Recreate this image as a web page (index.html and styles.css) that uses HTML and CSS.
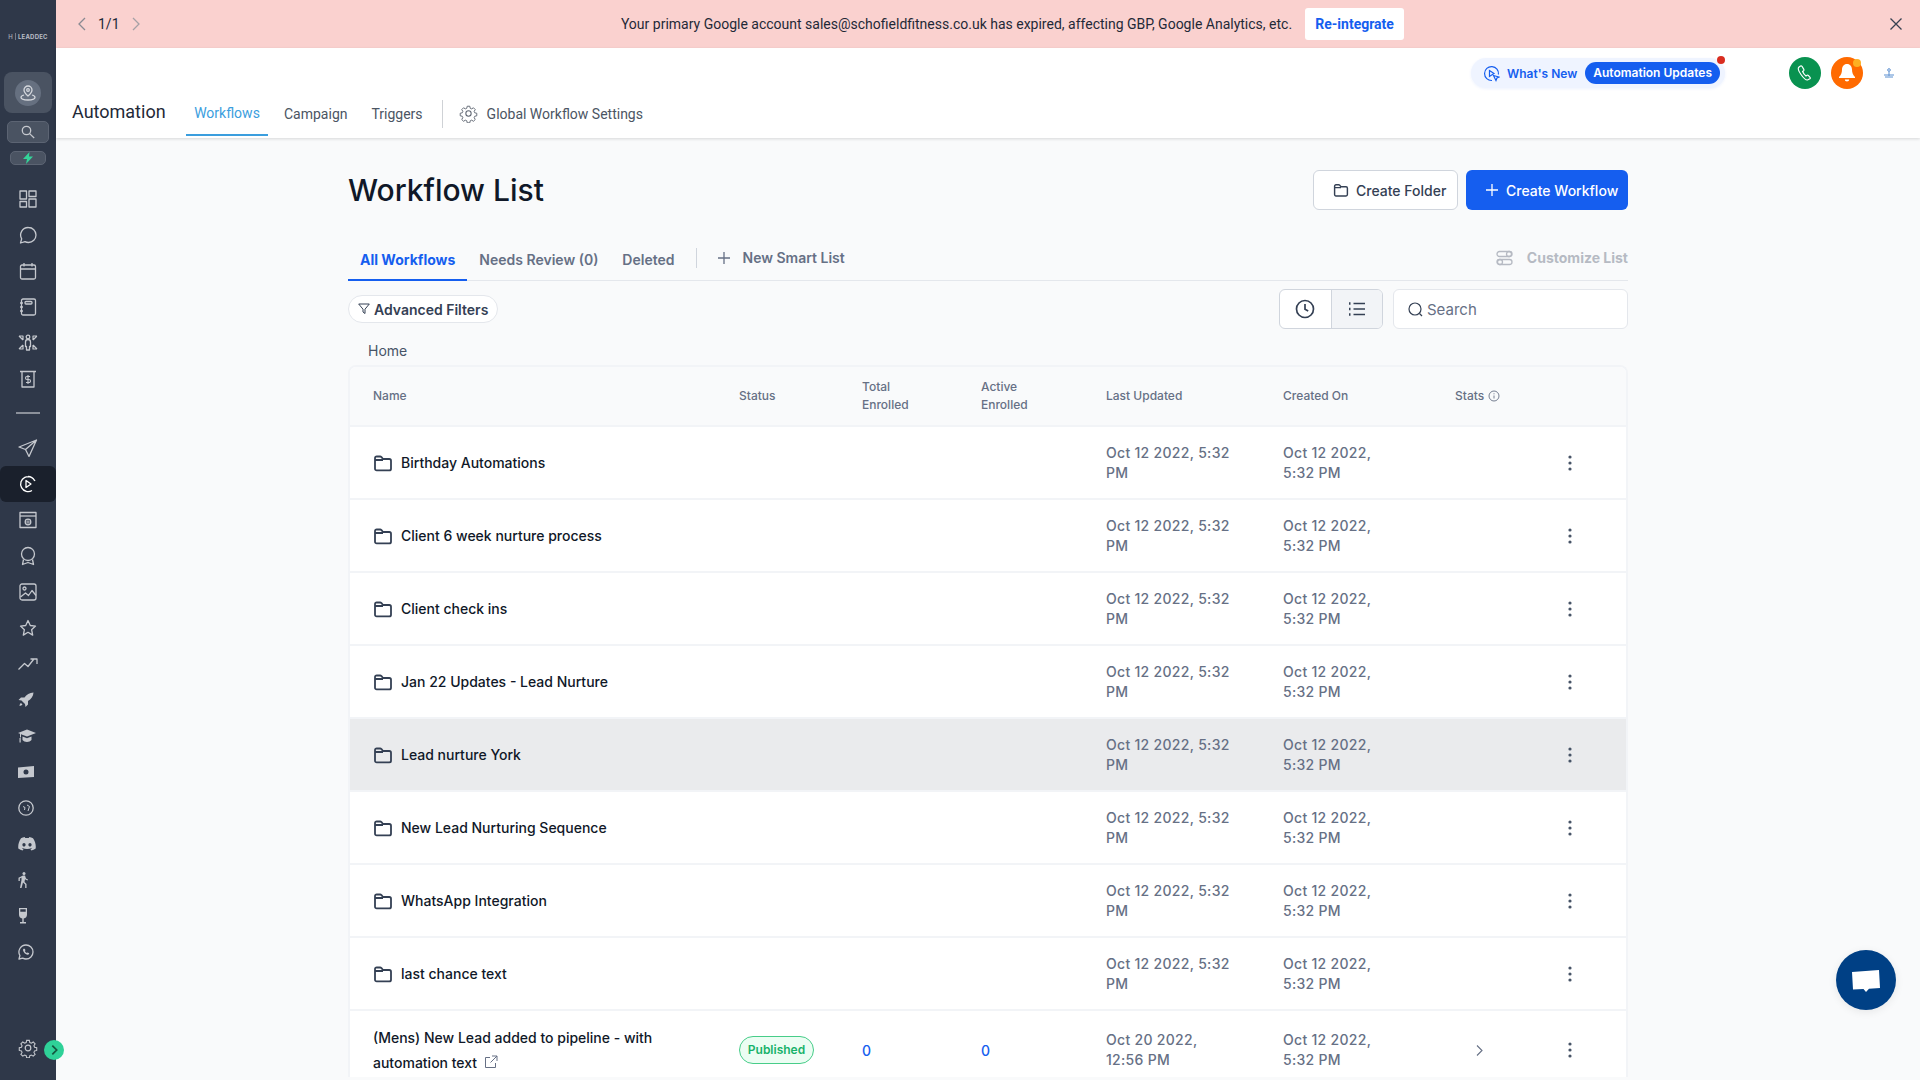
FILE: index.html
```html
<!DOCTYPE html>
<html>
<head>
    <title>Workflow List</title>
    <link rel="stylesheet" href="styles.css">
</head>
<body>
    <svg class="defs" width="0" height="0">
        <symbol id="folder" viewBox="0 0 20 20"><path d="M2 5.200c0-1 .7-1.700 1.700-1.700h3.400c.6 0 1 .3 1.400.7L10 6h6.300c1 0 1.700.7 1.700 1.700v8c0 1-.7 1.700-1.700 1.700H3.700c-1 0-1.700-.7-1.700-1.700z M2 7h8" fill="none" stroke="currentColor" stroke-width="1.800" stroke-linejoin="round"/></symbol>
        <symbol id="kebab" viewBox="0 0 4 16"><circle cx="2" cy="2" r="1.600"/><circle cx="2" cy="8" r="1.600"/><circle cx="2" cy="14" r="1.600"/></symbol>
    </svg>

    <aside class="sidebar">
        <div class="logo"><span class="logo-mark">H</span><span class="logo-text">LEADDEC</span></div>
        <div class="profile">
            <span class="profile-dot">
                <svg width="18" height="18" viewBox="0 0 18 18" fill="none" stroke="#d5d8dd" stroke-width="1.300"><path d="M9 2a4 4 0 0 1 4 4c0 2.500-4 6-4 6S5 8.500 5 6a4 4 0 0 1 4-4z"/><circle cx="9" cy="6" r="1.300"/><path d="M5 11c-2 .6-3 1.400-3 2.300C2 15 5 16 9 16s7-1 7-2.700c0-.9-1-1.700-3-2.300"/></svg>
            </span>
        </div>
        <div class="quick-search">
            <svg width="14" height="14" viewBox="0 0 14 14" fill="none" stroke="#c5c8ce" stroke-width="1.300"><circle cx="5.500" cy="5.500" r="4.200"/><path d="M8.600 8.600l4.600 4.400"/></svg>
        </div>
        <div class="bolt">
            <svg width="12" height="12" viewBox="0 0 12 12"><path d="M7.500 0L1 7h4l-1 5 7-7.500H7z" fill="#34d399"/></svg>
        </div>

        <nav class="nav">
            <a class="nav-item"><svg width="18" height="18" viewBox="0 0 18 18"><rect x="1" y="1" width="6.500" height="8"/><rect x="10" y="1" width="7" height="5.500"/><rect x="1" y="11.500" width="6.500" height="5.500"/><rect x="10" y="9" width="7" height="8"/></svg></a>
            <a class="nav-item"><svg width="18" height="18" viewBox="0 0 18 18"><path d="M9.500 1.500a7.500 7.500 0 0 1 0 15c-1.300 0-2.500-.3-3.500-.9L1.500 17l1.200-4.200A7.500 7.500 0 0 1 9.500 1.500z"/></svg></a>
            <a class="nav-item"><svg width="18" height="18" viewBox="0 0 18 18"><rect x="1.500" y="3" width="15" height="14" rx="1.500"/><path d="M1.500 7h15M5 1v3.500M13 1v3.500"/></svg></a>
            <a class="nav-item"><svg width="18" height="18" viewBox="0 0 18 18"><rect x="2.500" y="1" width="14" height="16" rx="1.500"/><rect x="6" y="3.500" width="7" height="2.500" rx="1"/><path d="M1 5h3M1 9h3M1 13h3"/></svg></a>
            <a class="nav-item"><svg width="20" height="18" viewBox="0 0 20 18"><circle cx="10" cy="3" r="1.800"/><path d="M7.500 8c0-1.500 1-2.500 2.500-2.500s2.500 1 2.500 2.500v4.500h-1V16h-3v-3.500h-1z"/><path d="M1 2h4v4M1 2l4 4M19 2h-4v4M19 2l-4 4M1 15h4v-4M1 15l4-4M19 15h-4v-4M19 15l-4-4" stroke-width="1.200"/></svg></a>
            <a class="nav-item"><svg width="18" height="18" viewBox="0 0 18 18"><path d="M1 1.500h16M3 1.500V17h12V1.500"/><path d="M11 6.500H8a1 1 0 0 0 0 3h2a1 1 0 0 1 0 3H7M9 5v9" stroke-width="1.100"/></svg></a>
            <div class="nav-divider"></div>
            <a class="nav-item"><svg width="20" height="18" viewBox="0 0 20 18"><path d="M18.500 1L1 8l6.500 2.500L11 17.500zM18.500 1L7.500 10.500"/></svg></a>
            <a class="nav-item active"><svg width="20" height="20" viewBox="0 0 20 20"><path d="M17 7a7.500 7.500 0 1 0-3 9.500M10 2.500a7.500 7.500 0 0 1 6.500 4" stroke="#fff"/><path d="M8 6.500l5 3.500-5 3.500z" stroke="#fff"/></svg></a>
            <a class="nav-item"><svg width="18" height="18" viewBox="0 0 18 18"><rect x="1" y="1.500" width="16" height="15"/><path d="M1 5h16"/><circle cx="9" cy="11" r="2.800"/><path d="M6.200 11h5.600M9 8.200v5.600" stroke-width=".8"/></svg></a>
            <a class="nav-item"><svg width="18" height="20" viewBox="0 0 18 20"><circle cx="9" cy="8" r="6.500"/><path d="M4.500 13.500L3.500 18.500 9 16.500l5.500 2-1-5"/></svg></a>
            <a class="nav-item"><svg width="18" height="18" viewBox="0 0 18 18"><rect x="1" y="1" width="16" height="16" rx="2"/><circle cx="5.500" cy="5.500" r="1.500"/><path d="M1.500 14l5-4 3 2.500 3.500-5 4 5"/></svg></a>
            <a class="nav-item"><svg width="18" height="18" viewBox="0 0 18 18"><path d="M9 1.500l2.300 5 5.200.6-3.900 3.600 1.100 5.400L9 13.300l-4.700 2.800 1.100-5.400-3.900-3.600 5.200-.6z"/></svg></a>
            <a class="nav-item"><svg width="20" height="12" viewBox="0 0 20 12"><path d="M.5 11.500l6-6 3.500 3 5.500-7M12.500 1h6.500v5"/></svg></a>
            <a class="nav-item filled"><svg width="16" height="16" viewBox="0 0 16 16"><path d="M15.500.5c-4 .2-7 2-9 5H3L.5 8l3 .5 3.500 3.500.5 3 2.500-2.500V9c3-2 5.300-4.500 5.500-8.500zM3 11c-1 .5-1.500 2-1.500 3 1-.1 2.500-.6 3-1.500z"/></svg></a>
            <a class="nav-item filled"><svg width="18" height="14" viewBox="0 0 18 14"><path d="M9 .5L18 4 9 7.500 3 5.200v3.300H2V4.800L0 4zM4.500 7.500L9 9.200l4.500-1.700V11c-1 1.200-2.700 2-4.500 2s-3.500-.8-4.500-2zM1.500 9h1.200v4.500H1.500z"/></svg></a>
            <a class="nav-item filled"><svg width="16" height="12" viewBox="0 0 16 12"><path fill-rule="evenodd" d="M0 1.500L16 0v11L0 12zM8 3.500a2.500 2.500 0 1 0 0 5 2.500 2.500 0 0 0 0-5z"/></svg></a>
            <a class="nav-item thin"><svg width="16" height="16" viewBox="0 0 16 16"><circle cx="8" cy="8" r="7.200"/><path d="M5 6.500l2 1 -.5 2.500M9 5l2.500 1.500L10 11" stroke-width="1"/></svg></a>
            <a class="nav-item filled"><svg width="18" height="14" viewBox="0 0 18 14"><path fill-rule="evenodd" d="M15 1.200C13.800.6 12.600.3 11.300.1l-.5 1C9.600.9 8.400.9 7.200 1.100l-.5-1C5.400.3 4.200.6 3 1.200.6 4.700 0 8.100.3 11.500 1.700 12.500 3.100 13.200 4.600 13.600l1-1.600c-.6-.2-1.100-.5-1.600-.8l.4-.3c3 1.400 6.300 1.400 9.200 0l.4.3c-.5.3-1 .6-1.600.8l1 1.600c1.500-.4 2.900-1.100 4.300-2.100.4-3.900-.6-7.300-2.700-10.300zM6 9.500c-.9 0-1.600-.8-1.600-1.800S5.100 5.900 6 5.900s1.600.8 1.600 1.800S6.900 9.500 6 9.500zm6 0c-.9 0-1.600-.8-1.600-1.800s.7-1.800 1.600-1.800 1.600.8 1.600 1.800-.7 1.800-1.600 1.800z"/></svg></a>
            <a class="nav-item filled"><svg width="10" height="16" viewBox="0 0 10 16"><circle cx="6" cy="1.500" r="1.500"/><path d="M5 3.500h2l1 3 2 1-.5 1-2.500-1.200L6.500 10l2 2v4h-1.300v-3.500L5 10.500 3.500 16H2l1.500-8V5.500l-1.700 1V9H.5V5.700z"/></svg></a>
            <a class="nav-item filled"><svg width="10" height="16" viewBox="0 0 10 16"><path fill-rule="evenodd" d="M1 0h8v6.500a4 4 0 0 1-3.300 3.900V14H8v1.500H2V14h2.300v-3.600A4 4 0 0 1 1 6.500zM2.300 1.300v2.500h5.400V1.300z"/></svg></a>
            <a class="nav-item thin"><svg width="16" height="16" viewBox="0 0 16 16"><path d="M8 1a7 7 0 0 1 0 14c-1.200 0-2.300-.3-3.300-.8L1 15l.9-3.500A7 7 0 0 1 8 1z"/><path d="M5.500 4.800c-.8.8-.6 2.200.6 3.700s2.800 2.500 3.900 2.200c.8-.2 1.200-.8 1.200-1.400l-1.600-.9-.8.7c-.9-.4-1.600-1.200-2-2.100l.7-.7-.8-1.600z" fill="#c5c8ce" stroke="none"/></svg></a>
        </nav>

        <div class="sidebar-foot">
            <svg width="20" height="20" viewBox="0 0 20 20" fill="none" stroke="#c5c8ce" stroke-width="1.200"><circle cx="10" cy="10" r="2.800"/><path d="M8.500 1.500h3l.5 2.400 1.700.7 2.100-1.300 2.100 2.100-1.300 2.100.7 1.700 2.400.5v3l-2.400.5-.7 1.700 1.300 2.100-2.100 2.100-2.100-1.300-1.700.7-.5 2.400h-3l-.5-2.400-1.700-.7-2.100 1.300-2.100-2.100 1.300-2.100-.7-1.700-2.400-.5v-3l2.400-.5.7-1.700-1.300-2.100 2.100-2.100 2.100 1.300 1.700-.7z" transform="translate(1 1) scale(.9)"/></svg>
            <span class="sidebar-toggle">
                <svg width="8" height="12" viewBox="0 0 8 12" fill="none" stroke="#14573f" stroke-width="2"><path d="M1.500 1l5 5-5 5"/></svg>
            </span>
        </div>
    </aside>

    <div class="main">
        <div class="banner">
            <div class="pager">
                <svg width="8" height="14" viewBox="0 0 8 14" fill="none" stroke="#8a8a92" stroke-width="1.300"><path d="M7 1L1 7l6 6"/></svg>
                <span class="pager-count">1/1</span>
                <svg width="8" height="14" viewBox="0 0 8 14" fill="none" stroke="#a5a1a6" stroke-width="1.300"><path d="M1 1l6 6-6 6"/></svg>
            </div>
            <div class="banner-msg">
                <span>Your primary Google account sales@schofieldfitness.co.uk has expired, affecting GBP, Google Analytics, etc.</span>
                <button class="reintegrate">Re-integrate</button>
            </div>
            <svg class="banner-close" width="12" height="12" viewBox="0 0 12 12" fill="none" stroke="#374151" stroke-width="1.300"><path d="M.5.500l11 11M11.500.500l-11 11"/></svg>
        </div>

        <header class="topbar">
            <div class="topbar-tools">
                <div class="whats-new">
                    <svg width="17" height="17" viewBox="0 0 17 17" fill="none" stroke="#155eef" stroke-width="1.200"><path d="M9 15.500a7 7 0 1 1 6.500-6"/><path d="M6.500 5.500l4.500 3-4.500 3z"/><path d="M10.500 10.500l5.500 1.500-2 1 -1 2.500z"/></svg>
                    <span class="whats-new-label">What's New</span>
                    <span class="whats-new-tag">Automation Updates</span>
                    <span class="red-dot"></span>
                </div>
                <span class="round-btn green">
                    <svg width="16" height="16" viewBox="0 0 16 16" fill="none" stroke="#fff" stroke-width="1.200"><path d="M3.500 1L1.800 2.300C1 3 1.300 5.500 4 9.500c2.800 4 5.200 5.700 6.500 5.500l2.300-1.200c.6-.4.600-1 .2-1.500l-1.700-1.900c-.4-.4-.9-.4-1.300-.1l-1 .7C7.700 10 6.200 8 5.600 6.500l1-.8c.4-.4.500-.9.200-1.300L5 1.300C4.600.8 4 .7 3.500 1z"/></svg>
                </span>
                <span class="round-btn orange">
                    <svg width="18" height="20" viewBox="0 0 18 20" fill="#fff"><path d="M9 1c-3.200 0-5 2.500-5 5.500 0 3.500-1 5.500-3 7.500v1h16v-1c-2-2-3-4-3-7.500C14 3.500 12.200 1 9 1z"/><path d="M6.800 16.500h4.400a2.200 2 0 0 1-4.400 0z"/></svg>
                    <span class="yellow-dot"></span>
                </span>
                <svg class="profile-mini" width="12" height="10" viewBox="0 0 12 10" fill="none" stroke="#5b8fd0" stroke-width="1"><circle cx="6" cy="2" r="1.300"/><path d="M6 3.500V8M1 7h10M2 9h8"/></svg>
            </div>
            <div class="topbar-nav">
                <span class="page-name">Automation</span>
                <a class="top-tab current">Workflows</a>
                <a class="top-tab">Campaign</a>
                <a class="top-tab">Triggers</a>
                <span class="top-sep"></span>
                <a class="top-tab settings">
                    <svg width="19" height="19" viewBox="0 0 20 20" fill="none" stroke="#5f6672" stroke-width="1.100"><circle cx="10" cy="10" r="2.800"/><path d="M8.500 1.500h3l.5 2.400 1.700.7 2.100-1.300 2.100 2.100-1.300 2.100.7 1.700 2.400.5v3l-2.400.5-.7 1.700 1.300 2.100-2.100 2.100-2.100-1.300-1.700.7-.5 2.400h-3l-.5-2.400-1.700-.7-2.100 1.300-2.100-2.100 1.300-2.100-.7-1.700-2.400-.5v-3l2.400-.5.7-1.700-1.300-2.100 2.100-2.100 2.100 1.300 1.700-.7z" transform="translate(1 1) scale(.9)"/></svg>
                    Global Workflow Settings
                </a>
            </div>
        </header>

        <main class="content">
            <div class="title-row">
                <h1>Workflow List</h1>
                <div class="title-actions">
                    <button class="btn btn-light">
                        <svg width="16" height="16" class="btn-icon"><use href="#folder"/></svg>
                        Create Folder
                    </button>
                    <button class="btn btn-primary">
                        <svg width="14" height="14" viewBox="0 0 14 14" fill="none" stroke="#fff" stroke-width="1.300"><path d="M7 1v12M1 7h12"/></svg>
                        Create Workflow
                    </button>
                </div>
            </div>

            <div class="list-tabs">
                <a class="list-tab current">All Workflows</a>
                <a class="list-tab">Needs Review (0)</a>
                <a class="list-tab">Deleted</a>
                <span class="list-sep"></span>
                <a class="smart-list">
                    <svg width="14" height="14" viewBox="0 0 14 14" fill="none" stroke="#667085" stroke-width="1.300"><path d="M7 1v12M1 7h12"/></svg>
                    New Smart List
                </a>
                <a class="customize">
                    <svg width="17" height="16" viewBox="0 0 17 16" fill="none" stroke="#b6bac3" stroke-width="1.300"><rect x="1" y="1.500" width="15" height="5" rx="2.500"/><rect x="1" y="9.500" width="15" height="5" rx="2.500"/><circle cx="13" cy="4" r="2.500"/><circle cx="4" cy="12" r="2.500"/></svg>
                    Customize List
                </a>
            </div>

            <div class="filter-row">
                <button class="adv-filters">
                    <svg width="12" height="12" viewBox="0 0 12 12" fill="none" stroke="#344054" stroke-width="1"><path d="M.7 1h10.600L7 6.200V10.500L5 9V6.200z"/></svg>
                    Advanced Filters
                </button>
                <div class="view-toggle">
                    <span class="view-btn">
                        <svg width="20" height="20" viewBox="0 0 20 20" fill="none" stroke="#344054" stroke-width="1.700"><circle cx="10" cy="10" r="8.500"/><path d="M10 5v5.300l3.200 1.700"/></svg>
                    </span>
                    <span class="view-btn selected">
                        <svg width="18" height="14" viewBox="0 0 18 14" fill="none" stroke="#344054" stroke-width="1.700"><path d="M5.500 1.500H17M5.500 7H17M5.500 12.500H17"/><path d="M1 1.500h1.500M1 7h1.500M1 12.500h1.500" stroke-width="2.400"/></svg>
                    </span>
                </div>
                <div class="search-box">
                    <svg width="15" height="15" viewBox="0 0 15 15" fill="none" stroke="#344054" stroke-width="1.200"><circle cx="7" cy="7" r="6"/><path d="M11.500 11.500l2.500 2.500"/></svg>
                    <span>Search</span>
                </div>
            </div>

            <div class="crumb">Home</div>

            <div class="table">
                <div class="row head">
                    <div>Name</div>
                    <div>Status</div>
                    <div class="narrow">Total Enrolled</div>
                    <div class="narrow">Active Enrolled</div>
                    <div>Last Updated</div>
                    <div>Created On</div>
                    <div class="stats-head">Stats
                        <svg width="12" height="12" viewBox="0 0 12 12" fill="none" stroke="#667085" stroke-width=".9"><circle cx="6" cy="6" r="5"/><path d="M6 5.500v3M6 3.300v1"/></svg>
                    </div>
                    <div></div>
                </div>

                <div class="row">
                    <div class="name"><svg class="folder" width="20" height="20"><use href="#folder"/></svg>Birthday Automations</div>
                    <div></div><div></div><div></div>
                    <div class="date updated">Oct 12 2022, 5:32 PM</div>
                    <div class="date created">Oct 12 2022, 5:32 PM</div>
                    <div></div>
                    <div class="more"><svg width="4" height="16"><use href="#kebab"/></svg></div>
                </div>
                <div class="row">
                    <div class="name"><svg class="folder" width="20" height="20"><use href="#folder"/></svg>Client 6 week nurture process</div>
                    <div></div><div></div><div></div>
                    <div class="date updated">Oct 12 2022, 5:32 PM</div>
                    <div class="date created">Oct 12 2022, 5:32 PM</div>
                    <div></div>
                    <div class="more"><svg width="4" height="16"><use href="#kebab"/></svg></div>
                </div>
                <div class="row">
                    <div class="name"><svg class="folder" width="20" height="20"><use href="#folder"/></svg>Client check ins</div>
                    <div></div><div></div><div></div>
                    <div class="date updated">Oct 12 2022, 5:32 PM</div>
                    <div class="date created">Oct 12 2022, 5:32 PM</div>
                    <div></div>
                    <div class="more"><svg width="4" height="16"><use href="#kebab"/></svg></div>
                </div>
                <div class="row">
                    <div class="name"><svg class="folder" width="20" height="20"><use href="#folder"/></svg>Jan 22 Updates - Lead Nurture</div>
                    <div></div><div></div><div></div>
                    <div class="date updated">Oct 12 2022, 5:32 PM</div>
                    <div class="date created">Oct 12 2022, 5:32 PM</div>
                    <div></div>
                    <div class="more"><svg width="4" height="16"><use href="#kebab"/></svg></div>
                </div>
                <div class="row hover">
                    <div class="name"><svg class="folder" width="20" height="20"><use href="#folder"/></svg>Lead nurture York</div>
                    <div></div><div></div><div></div>
                    <div class="date updated">Oct 12 2022, 5:32 PM</div>
                    <div class="date created">Oct 12 2022, 5:32 PM</div>
                    <div></div>
                    <div class="more"><svg width="4" height="16"><use href="#kebab"/></svg></div>
                </div>
                <div class="row">
                    <div class="name"><svg class="folder" width="20" height="20"><use href="#folder"/></svg>New Lead Nurturing Sequence</div>
                    <div></div><div></div><div></div>
                    <div class="date updated">Oct 12 2022, 5:32 PM</div>
                    <div class="date created">Oct 12 2022, 5:32 PM</div>
                    <div></div>
                    <div class="more"><svg width="4" height="16"><use href="#kebab"/></svg></div>
                </div>
                <div class="row">
                    <div class="name"><svg class="folder" width="20" height="20"><use href="#folder"/></svg>WhatsApp Integration</div>
                    <div></div><div></div><div></div>
                    <div class="date updated">Oct 12 2022, 5:32 PM</div>
                    <div class="date created">Oct 12 2022, 5:32 PM</div>
                    <div></div>
                    <div class="more"><svg width="4" height="16"><use href="#kebab"/></svg></div>
                </div>
                <div class="row">
                    <div class="name"><svg class="folder" width="20" height="20"><use href="#folder"/></svg>last chance text</div>
                    <div></div><div></div><div></div>
                    <div class="date updated">Oct 12 2022, 5:32 PM</div>
                    <div class="date created">Oct 12 2022, 5:32 PM</div>
                    <div></div>
                    <div class="more"><svg width="4" height="16"><use href="#kebab"/></svg></div>
                </div>
                <div class="row last">
                    <div class="name-long">(Mens) New Lead added to pipeline - with automation text
                        <svg class="ext" width="14" height="14" viewBox="0 0 14 14" fill="none" stroke="#667085" stroke-width="1"><path d="M6 2.500H1.500v10h10V8M8 1h5v5M13 1L6.500 7.500"/></svg>
                    </div>
                    <div><span class="badge">Published</span></div>
                    <div class="count">0</div>
                    <div class="count">0</div>
                    <div class="date updated">Oct 20 2022, 12:56 PM</div>
                    <div class="date created">Oct 12 2022, 5:32 PM</div>
                    <div class="stats-cell"><svg width="7" height="11" viewBox="0 0 7 11" fill="none" stroke="#667085" stroke-width="1.100"><path d="M1 .500l5 5-5 5"/></svg></div>
                    <div class="more"><svg width="4" height="16"><use href="#kebab"/></svg></div>
                </div>
            </div>
        </main>
    </div>

    <span class="chat-bubble">
        <svg width="30" height="26" viewBox="0 0 30 26"><path d="M1 5l27-2 1 18-11 .7-3 3.300-2.500-3L2 22.500z" fill="#fff"/></svg>
    </span>
</body>
</html>
```

FILE: styles.css
```css
/* Page */
* {
    box-sizing: border-box;
}

body {
    margin: 0;
    height: 1080px;
    overflow: hidden;
    display: flex;
    font-family: Inter, "Liberation Sans", sans-serif;
    background-color: #f9fafb;
    color: #101828;
}

button {
    font-family: inherit;
}

.defs {
    position: absolute;
}

/* Left sidebar */
.sidebar {
    width: 56px;
    flex-shrink: 0;
    background-color: #2f3849;
    display: flex;
    flex-direction: column;
    align-items: center;
    position: relative;
}

.logo {
    height: 72px;
    display: flex;
    align-items: center;
    gap: 2px;
    color: #b9bdc5;
    font-size: 6px;
    font-weight: 700;
    letter-spacing: .2px;
}

.logo-mark {
    padding-right: 2px;
    border-right: 1px solid #777e8b;
    color: #8f95a1;
}

.profile {
    width: 48px;
    height: 41px;
    background-color: #4a5362;
    border-radius: 8px;
    display: flex;
    align-items: center;
    justify-content: center;
}

.profile-dot {
    width: 26px;
    height: 26px;
    border-radius: 50%;
    background-color: #667080;
    display: flex;
    align-items: center;
    justify-content: center;
}

.quick-search {
    width: 42px;
    height: 22px;
    margin-top: 8px;
    background-color: #4a5362;
    border: 1px solid #5c6473;
    border-radius: 5px;
    display: flex;
    align-items: center;
    justify-content: center;
}

.bolt {
    width: 36px;
    height: 14px;
    margin-top: 8px;
    background-color: #4a5362;
    border: 1px solid #5c6473;
    border-radius: 5px;
    display: flex;
    align-items: center;
    justify-content: center;
}

.nav {
    width: 100%;
    margin-top: 16px;
    display: flex;
    flex-direction: column;
}

.nav-item {
    height: 36px;
    flex-shrink: 0;
    display: flex;
    align-items: center;
    justify-content: center;
}

.nav-item svg {
    fill: none;
    stroke: #c5c8ce;
    stroke-width: 1.300;
    stroke-linejoin: round;
}

.nav-item.filled svg {
    fill: #c5c8ce;
    stroke: none;
}

.nav-item.filled,
.nav-item.thin {
    justify-content: flex-start;
    padding-left: 18px;
}

.nav-item.active {
    background-color: #1a202c;
    border-radius: 6px;
}

.nav-divider {
    width: 24px;
    height: 2px;
    margin: 15px auto 16px;
    background-color: #8b909a;
}

.sidebar-foot {
    position: absolute;
    left: 18px;
    top: 1038px;
}

.sidebar-foot svg {
    display: block;
}

.sidebar-toggle {
    position: absolute;
    left: 26px;
    top: 2px;
    width: 20px;
    height: 20px;
    border-radius: 50%;
    background-color: #2fd198;
    display: flex;
    align-items: center;
    justify-content: center;
}

.sidebar-toggle svg {
    width: 7px;
}

.main {
    flex: 1;
    min-width: 0;
    display: flex;
    flex-direction: column;
}

/* Pink banner */
.banner {
    height: 48px;
    background-color: #fad1cf;
    display: flex;
    align-items: center;
    font-family: Roboto, sans-serif;
    font-size: 14px;
    color: #1f2937;
}

.pager {
    width: 117px;
    padding-left: 22px;
    display: flex;
    align-items: center;
    gap: 12px;
    flex-shrink: 0;
}

.pager-count {
    color: #1f2937;
}

.banner-msg {
    flex: 1;
    display: flex;
    align-items: center;
    justify-content: center;
    gap: 13px;
}

.reintegrate {
    width: 99px;
    height: 32px;
    background-color: #fff;
    border: none;
    border-radius: 3px;
    color: #155eef;
    font-family: Roboto, sans-serif;
    font-size: 14px;
    font-weight: 700;
}

.banner-close {
    margin: 0 18px 0 38px;
    flex-shrink: 0;
}

/* Top bar */
.topbar {
    height: 90px;
    background-color: #fff;
    box-shadow: 0 1px 3px rgba(0, 0, 0, 0.14);
    position: relative;
    z-index: 1;
}

.topbar-tools {
    height: 50px;
    padding-left: 1415px;
    display: flex;
    align-items: center;
}

.whats-new {
    width: 254px;
    height: 30px;
    padding: 0 5px 0 12px;
    background-color: #eff4ff;
    border-radius: 15px;
    display: flex;
    align-items: center;
    position: relative;
    box-shadow: 0 1px 3px rgba(21, 94, 239, 0.08);
}

.whats-new-label {
    margin-left: 7px;
    font-size: 12px;
    font-weight: 600;
    color: #155eef;
    white-space: nowrap;
}

.whats-new-tag {
    margin-left: 8px;
    height: 22px;
    padding: 0 8px;
    border-radius: 11px;
    background-color: #155eef;
    color: #fff;
    font-size: 12px;
    font-weight: 600;
    line-height: 22px;
    white-space: nowrap;
}

.red-dot {
    position: absolute;
    right: 0;
    top: -2px;
    width: 8px;
    height: 8px;
    border-radius: 50%;
    background-color: #d92d20;
}

.round-btn {
    width: 32px;
    height: 32px;
    border-radius: 50%;
    display: flex;
    align-items: center;
    justify-content: center;
    position: relative;
}

.green {
    margin-left: 64px;
    background-color: #099250;
}

.orange {
    margin-left: 10px;
    background-color: #ff6a00;
}

.yellow-dot {
    position: absolute;
    right: 2px;
    top: 2px;
    width: 8px;
    height: 8px;
    border-radius: 50%;
    background-color: #fdb022;
}

.profile-mini {
    margin-left: 20px;
}

.topbar-nav {
    height: 40px;
    padding-left: 16px;
    display: flex;
    align-items: flex-start;
    font-family: Roboto, sans-serif;
}

.page-name {
    width: 114px;
    font-size: 18px;
    line-height: 22px;
    margin-top: 3px;
    color: #1f2937;
}

.top-tab {
    padding: 0 8px;
    height: 30px;
    font-size: 14px;
    line-height: 20px;
    margin-top: 6px;
    margin-right: 8px;
    color: #4b5563;
    white-space: nowrap;
}

.top-tab.current {
    color: #3b9ede;
    border-bottom: 2px solid #3b9ede;
    height: 36px;
    margin-top: 2px;
    margin-right: 8px;
    padding-top: 3px;
    width: 82px;
    text-align: center;
}

.top-sep {
    width: 1px;
    height: 28px;
    margin: 2px 9px 0 3px;
    background-color: #cfd2d6;
}

.top-tab.settings {
    display: flex;
    align-items: flex-start;
    gap: 9px;
    padding-left: 7px;
}

/* Content */
.content {
    width: 1280px;
    margin-left: 292px;
}

.title-row {
    height: 92px;
    padding-top: 32px;
    display: flex;
    justify-content: space-between;
}

h1 {
    margin: 0;
    font-size: 30px;
    font-weight: 500;
    line-height: 40px;
    color: #101828;
}

.title-actions {
    display: flex;
    gap: 8px;
}

.btn {
    height: 40px;
    padding: 0 0 0 19px;
    border-radius: 6px;
    display: flex;
    align-items: center;
    gap: 7px;
    font-size: 14px;
    font-weight: 500;
    white-space: nowrap;
}

.btn-light {
    width: 145px;
    background-color: #fff;
    border: 1px solid #d0d5dd;
    color: #344054;
}

.btn-icon {
    color: #344054;
}

.btn-primary {
    width: 162px;
    background-color: #155eef;
    border: none;
    color: #fff;
}

.list-tabs {
    height: 51px;
    border-bottom: 1px solid #e4e7ec;
    display: flex;
    font-size: 14px;
    font-weight: 600;
    color: #667085;
}

.list-tab {
    padding: 20px 12px 0;
    height: 51px;
    line-height: 20px;
    white-space: nowrap;
}

.list-tab.current {
    color: #155eef;
    font-weight: 700;
    border-bottom: 2px solid #155eef;
}

.list-sep {
    width: 1px;
    height: 20px;
    margin: 18px 20px 0 9px;
    background-color: #d0d5dd;
}

.smart-list {
    padding-top: 18px;
    display: flex;
    align-items: flex-start;
    gap: 12px;
    font-weight: 600;
    line-height: 20px;
}

.smart-list svg {
    margin-top: 3px;
}

.customize {
    margin-left: auto;
    padding-top: 18px;
    display: flex;
    align-items: flex-start;
    gap: 14px;
    font-weight: 700;
    line-height: 20px;
    color: #b6bac3;
}

.customize svg {
    margin-top: 2px;
}

.filter-row {
    height: 47px;
    padding-top: 8px;
    display: flex;
    align-items: flex-start;
}

.adv-filters {
    margin-top: 6px;
    width: 150px;
    height: 28px;
    padding: 0 0 0 9px;
    background-color: #fff;
    border: 1px solid #e4e7ec;
    border-radius: 14px;
    display: flex;
    align-items: center;
    gap: 4px;
    font-size: 14px;
    font-weight: 600;
    color: #344054;
}

.view-toggle {
    margin-left: auto;
    width: 104px;
    height: 40px;
    border: 1px solid #d0d5dd;
    border-radius: 6px;
    overflow: hidden;
    display: flex;
    background-color: #fff;
}

.view-btn {
    flex: 1;
    display: flex;
    align-items: center;
    justify-content: center;
}

.view-btn.selected {
    background-color: #f2f4f7;
    border-left: 1px solid #d0d5dd;
}

.search-box {
    margin-left: 10px;
    width: 235px;
    height: 40px;
    padding-left: 14px;
    background-color: #fff;
    border: 1px solid #e4e7ec;
    border-radius: 6px;
    display: flex;
    align-items: center;
    gap: 4px;
    font-size: 15px;
    color: #667085;
}

.crumb {
    height: 37px;
    padding: 13px 0 0 20px;
    font-size: 14px;
    line-height: 20px;
    color: #475467;
}

/* Table */
.table {
    height: 712px;
    overflow: hidden;
    background-color: #fff;
    border: 2px solid #f2f4f7;
    border-bottom: none;
    border-radius: 8px 8px 0 0;
}

.row {
    height: 73px;
    padding-left: 23px;
    border-bottom: 2px solid #f2f4f7;
    display: grid;
    grid-template-columns: 366px 123px 119px 125px 177px 172px 112px 1fr;
    align-items: center;
    font-size: 14px;
}

.row.head {
    height: 60px;
    background-color: #f9fafb;
    font-size: 12px;
    font-weight: 500;
    line-height: 18px;
    color: #667085;
}

.row.hover {
    background-color: #eaebed;
}

.row.last {
    height: 78px;
    border-bottom: none;
}

.narrow {
    width: 60px;
}

.stats-head {
    display: flex;
    align-items: center;
    gap: 4px;
}

.name {
    display: flex;
    align-items: center;
    gap: 8px;
    font-weight: 500;
    color: #101828;
    white-space: nowrap;
}

.folder {
    color: #344054;
}

.name-long {
    width: 310px;
    font-weight: 500;
    line-height: 25px;
    color: #101828;
}

.ext {
    margin-left: 3px;
    vertical-align: -1px;
}

.date {
    font-weight: 500;
    line-height: 20px;
    color: #667085;
    letter-spacing: .3px;
}

.date.updated {
    padding-right: 48px;
}

.date.created {
    padding-right: 60px;
}

.more {
    display: flex;
    fill: #475467;
    padding-left: 1px;
}

.badge {
    display: inline-block;
    height: 28px;
    width: 75px;
    border: 1px solid #47cd89;
    border-radius: 14px;
    background-color: #ecfdf3;
    font-size: 12px;
    font-weight: 600;
    line-height: 26px;
    text-align: center;
    color: #17b26a;
}

.count {
    font-weight: 500;
    color: #155eef;
}

.stats-cell {
    display: flex;
    padding-left: 21px;
}

/* Chat launcher */
.chat-bubble {
    position: absolute;
    left: 1836px;
    top: 950px;
    width: 60px;
    height: 60px;
    border-radius: 50%;
    background-color: #004085;
    box-shadow: 0 2px 8px rgba(0, 0, 0, 0.08);
    display: flex;
    align-items: center;
    justify-content: center;
}
```
